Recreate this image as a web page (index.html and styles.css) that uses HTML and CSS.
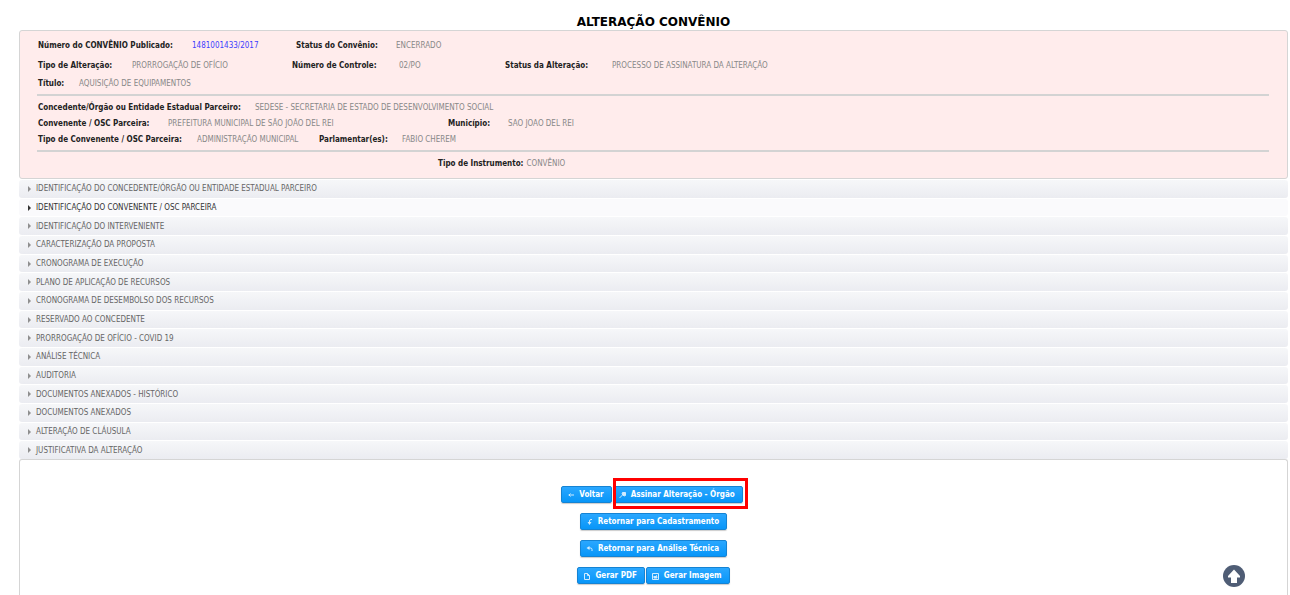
FILE: index.html
```html
<!DOCTYPE html>
<html lang="pt-BR">
<head>
<meta charset="utf-8">
<meta name="viewport" content="width=device-width, initial-scale=1">
<title>Alteração Convênio</title>
<link rel="stylesheet" href="styles.css">
</head>
<body>
<main class="page">
  <h1 class="title">ALTERAÇÃO CONVÊNIO</h1>

  <section class="summary">
    <dl class="row row-number">
      <dt>Número do CONVÊNIO Publicado:</dt><dd><a href="#">1481001433/2017</a></dd>
      <dt>Status do Convênio:</dt><dd>ENCERRADO</dd>
    </dl>
    <dl class="row row-change">
      <dt>Tipo de Alteração:</dt><dd>PRORROGAÇÃO DE OFÍCIO</dd>
      <dt>Número de Controle:</dt><dd>02/PO</dd>
      <dt>Status da Alteração:</dt><dd>PROCESSO DE ASSINATURA DA ALTERAÇÃO</dd>
    </dl>
    <dl class="row row-title">
      <dt>Título:</dt><dd>AQUISIÇÃO DE EQUIPAMENTOS</dd>
    </dl>
    <hr class="rule">
    <dl class="row row-grantor">
      <dt>Concedente/Órgão ou Entidade Estadual Parceiro:</dt><dd>SEDESE - SECRETARIA DE ESTADO DE DESENVOLVIMENTO SOCIAL</dd>
    </dl>
    <dl class="row row-partner">
      <dt>Convenente / OSC Parceira:</dt><dd>PREFEITURA MUNICIPAL DE SÃO JOÃO DEL REI</dd>
      <dt>Município:</dt><dd>SAO JOAO DEL REI</dd>
    </dl>
    <dl class="row row-kind">
      <dt>Tipo de Convenente / OSC Parceira:</dt><dd>ADMINISTRAÇÃO MUNICIPAL</dd>
      <dt>Parlamentar(es):</dt><dd>FABIO CHEREM</dd>
    </dl>
    <hr class="rule">
    <dl class="row row-instrument">
      <dt>Tipo de Instrumento:</dt><dd>CONVÊNIO</dd>
    </dl>
  </section>

  <div class="accordion">
    <button class="tab" type="button">IDENTIFICAÇÃO DO CONCEDENTE/ÓRGÃO OU ENTIDADE ESTADUAL PARCEIRO</button>
    <button class="tab tab-hover" type="button">IDENTIFICAÇÃO DO CONVENENTE / OSC PARCEIRA</button>
    <button class="tab" type="button">IDENTIFICAÇÃO DO INTERVENIENTE</button>
    <button class="tab" type="button">CARACTERIZAÇÃO DA PROPOSTA</button>
    <button class="tab" type="button">CRONOGRAMA DE EXECUÇÃO</button>
    <button class="tab" type="button">PLANO DE APLICAÇÃO DE RECURSOS</button>
    <button class="tab" type="button">CRONOGRAMA DE DESEMBOLSO DOS RECURSOS</button>
    <button class="tab" type="button">RESERVADO AO CONCEDENTE</button>
    <button class="tab" type="button">PRORROGAÇÃO DE OFÍCIO - COVID 19</button>
    <button class="tab" type="button">ANÁLISE TÉCNICA</button>
    <button class="tab" type="button">AUDITORIA</button>
    <button class="tab" type="button">DOCUMENTOS ANEXADOS - HISTÓRICO</button>
    <button class="tab" type="button">DOCUMENTOS ANEXADOS</button>
    <button class="tab" type="button">ALTERAÇÃO DE CLÁUSULA</button>
    <button class="tab" type="button">JUSTIFICATIVA DA ALTERAÇÃO</button>
  </div>

  <section class="actions">
    <div class="group group-sign">
      <button class="btn" type="button"><svg class="icon" viewBox="0 0 8 8"><path d="M7 4H1.500M3.500 2.500L2 4l1.500 1.500"/></svg>Voltar</button>
      <span class="marked"><button class="btn" type="button"><svg class="icon" viewBox="0 0 8 8"><path d="M.5 7L4 3.500"/><path d="M3.500 1.500h3v3l-1.500.5-2-2z" fill="#fff"/></svg>Assinar Alteração - Órgão</button></span>
    </div>
    <div class="group">
      <button class="btn" type="button"><svg class="icon" viewBox="0 0 8 8"><path d="M6 1.500H5Q3.500 1.500 3.500 3v3"/><path d="M1.500 4h4l-2 3z" fill="#fff" stroke="none"/></svg>Retornar para Cadastramento</button>
    </div>
    <div class="group">
      <button class="btn" type="button"><svg class="icon" viewBox="0 0 8 8"><path d="M2 3h2.500Q6 3 6 4.500V6"/><path d="M3.500 1v4L.5 3z" fill="#fff" stroke="none"/></svg>Retornar para Análise Técnica</button>
    </div>
    <div class="group">
      <button class="btn" type="button"><svg class="icon" viewBox="0 0 8 8"><path d="M1.500 1.500h3l2 2v4h-5zM4.500 1.500v2h2"/></svg>Gerar PDF</button>
      <button class="btn" type="button"><svg class="icon" viewBox="0 0 8 8"><path d="M.5 1.500h6v6h-6z"/><path d="M2 6V4l1 1 1.500-1.500L5 6z" fill="#fff"/></svg>Gerar Imagem</button>
    </div>
  </section>
</main>
<button class="to-top" type="button" aria-label="Voltar ao topo">
  <svg viewBox="0 0 22 22"><circle cx="11" cy="11" r="11" fill="#4f5d75"/><path d="M11 4.500L17 11v1.500h-3V18H8v-5.500H5V11z" fill="#fff"/></svg>
</button>
</body>
</html>
```
FILE: styles.css
```css
* { box-sizing: border-box; }

body {
  margin: 0;
  background: #fff;
  color: #222;
  font-family: "DejaVu Sans Condensed", "DejaVu Sans", sans-serif;
  font-size: 8px;
}

button { font: inherit; }

.page {
  display: flex;
  flex-direction: column;
  min-height: 100vh;
  padding: 15px 2px 0 19px;
}

.title {
  margin: 0;
  color: #000;
  font: bold 12px/15px "DejaVu Sans", sans-serif;
  text-align: center;
}

.summary {
  padding: 5px 18px 6px 17px;
  border: 1px solid #d5d5d5;
  border-radius: 3px;
  background: #ffecec;
}

.row {
  display: grid;
  margin: 0;
  padding-left: 1px;
  line-height: 16px;
  white-space: nowrap;
}

.row dt { font-weight: bold; }

.row dd {
  margin: 0;
  color: #888;
}

.row a {
  color: #3d3dff;
  text-decoration: none;
}

.row-number { grid-template-columns: 154px 104px 100px 1fr; line-height: 20px; }
.row-change { grid-template-columns: 94px 160px 107px 106px 107px 1fr; line-height: 20px; }
.row-title { grid-template-columns: 41px 1fr; }
.row-grantor { grid-template-columns: 217px 1fr; }
.row-partner { grid-template-columns: 130px 280px 60px 1fr; }
.row-kind { grid-template-columns: 159px 122px 83px 1fr; }

.row-instrument {
  display: flex;
  gap: 3px;
  padding-left: 401px;
}

.rule {
  height: 2px;
  margin: 2px 0 4px;
  border: 0;
  background: #d3d3d3;
}

.accordion {
  display: flex;
  flex-direction: column;
  gap: 1px;
  min-height: 280px;
  padding-top: 1px;
}

.tab {
  display: flex;
  flex: 1;
  align-items: center;
  gap: 5px;
  padding: 0 9px;
  border: 0;
  border-radius: 3px;
  background: linear-gradient(#f6f7f9, #ebecf1);
  color: #666;
  text-align: left;
}

.tab::before {
  content: "";
  border: 3px solid transparent;
  border-right-width: 0;
  border-left: 3px solid #8f8f8f;
}

.tab-hover {
  background: #fafafc;
  color: #333;
}

.tab-hover::before { border-left-color: #333; }

.actions {
  display: flex;
  flex: 1;
  flex-direction: column;
  align-items: center;
  gap: 10px;
  padding: 26px 0 11px;
  border: 1px solid #d5d5d5;
  border-bottom: 0;
  border-radius: 3px 3px 0 0;
}

.group {
  display: flex;
  gap: 1px;
}

.group-sign { padding-right: 3px; }

.btn {
  display: flex;
  align-items: center;
  gap: 4px;
  height: 17px;
  padding: 0 7px 0 5px;
  border: 1px solid #1583d3;
  border-radius: 2px;
  background: linear-gradient(#2aa7ff, #0896f8);
  box-shadow: 0 1px 1px #ccc;
  color: #fff;
  font-weight: bold;
  line-height: 12px;
  white-space: nowrap;
}

.icon {
  width: 8px;
  height: 8px;
  fill: none;
  stroke: #fff;
  stroke-width: 1;
  opacity: 0.8;
}

.marked { position: relative; }

.marked::after {
  content: "";
  position: absolute;
  inset: -8px -5px -6px 0;
  border: 3px solid #f00;
  pointer-events: none;
}

.to-top {
  position: fixed;
  right: 45px;
  bottom: 8px;
  width: 22px;
  height: 22px;
  padding: 0;
  border: 0;
  background: none;
}

.to-top svg { display: block; }
```
